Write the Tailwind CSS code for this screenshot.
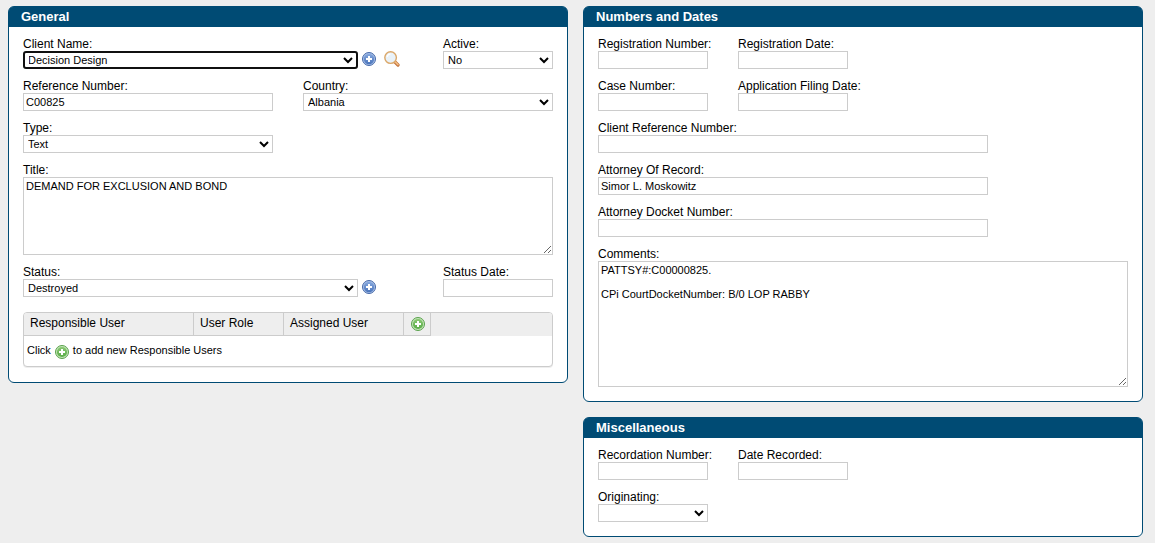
<!DOCTYPE html>
<html lang="en">
<head>
    <meta charset="UTF-8">
    <meta name="viewport" content="width=device-width, initial-scale=1.0">
    <title>Docket Record</title>
    <script src="https://cdn.jsdelivr.net/npm/@tailwindcss/browser@4"></script>
    <style>
        body {
            font-family: 'Liberation Sans', Arial, sans-serif;
        }
    </style>
</head>
<body class="h-[543px] overflow-hidden bg-[#eeeeee] text-[12px] leading-[14px] text-black">
    <!-- shared icons -->
    <svg class="absolute size-0">
        <defs>
            <linearGradient id="blue" x1="0" y1="0" x2="0" y2="1">
                <stop offset="0" stop-color="#86a8de"/>
                <stop offset="1" stop-color="#4a74bb"/>
            </linearGradient>
            <linearGradient id="green" x1="0" y1="0" x2="0" y2="1">
                <stop offset="0" stop-color="#8ac873"/>
                <stop offset="1" stop-color="#57ab46"/>
            </linearGradient>
            <symbol id="add-blue" viewBox="0 0 14 14">
                <circle cx="7" cy="7" r="6.5" fill="#a9c1e8" stroke="#4568a8"/>
                <circle cx="7" cy="7" r="5.2" fill="url(#blue)"/>
                <path d="M7 4v6M4 7h6" stroke="#fff" stroke-width="2"/>
            </symbol>
            <symbol id="add-green" viewBox="0 0 14 14">
                <circle cx="7" cy="7" r="6.5" fill="#c5e6b9" stroke="#58a04b"/>
                <circle cx="7" cy="7" r="5.1" fill="url(#green)"/>
                <path d="M7 4v6M4 7h6" stroke="#fff" stroke-width="2"/>
            </symbol>
            <symbol id="search" viewBox="0 0 16 16">
                <path d="M11 11l3 3" stroke="#c0713a" stroke-width="3.2" stroke-linecap="round"/>
                <path d="M11 10.6l3 3" stroke="#f2bd84" stroke-width="1.5" stroke-linecap="round"/>
                <circle cx="6.6" cy="6.6" r="5.8" fill="#e9f2f9" stroke="#dba768" stroke-width="1.4"/>
                <path d="M3.2 6a3.6 3.6 0 0 1 3.3-3" fill="none" stroke="#fff" stroke-width="1.2"/>
            </symbol>
        </defs>
    </svg>

    <div class="flex items-start gap-[15px] pt-[6px] pl-2">
        <!-- General -->
        <section class="h-[377px] w-[560px] rounded-[6px] border border-[#004b74] bg-white">
            <h2 class="h-5 rounded-t-[4px] bg-[#004b74] pl-3 text-[13px] leading-[19px] font-bold text-white">General</h2>
            <form class="flex flex-col gap-[10px] px-[14px] pt-[10px]">
                <div class="flex justify-between">
                    <div>
                        <label for="client" class="block">Client Name:</label>
                        <div class="flex h-[18px]">
                            <select id="client" class="h-[18px] w-[335px] rounded-[3px] border-2 border-[#101010] bg-white pr-0 text-[11px] -indent-px outline-none"><option>Decision Design</option></select>
                            <svg class="mt-px ml-1 size-[14px]"><use href="#add-blue"/></svg>
                            <svg class="ml-2 size-4"><use href="#search"/></svg>
                        </div>
                    </div>
                    <div>
                        <label for="active" class="block">Active:</label>
                        <select id="active" class="block h-[18px] w-[110px] border border-[#cccccc] bg-white text-[11px]"><option>No</option></select>
                    </div>
                </div>
                <div class="flex gap-[30px]">
                    <div>
                        <label for="reference" class="block">Reference Number:</label>
                        <input id="reference" type="text" value="C00825" class="block h-[18px] w-[250px] border border-[#cccccc] bg-white px-[2px] text-[11px]">
                    </div>
                    <div>
                        <label for="country" class="block">Country:</label>
                        <select id="country" class="block h-[18px] w-[250px] border border-[#cccccc] bg-white text-[11px]"><option>Albania</option></select>
                    </div>
                </div>
                <div>
                    <label for="type" class="block">Type:</label>
                    <select id="type" class="block h-[18px] w-[250px] border border-[#cccccc] bg-white text-[11px]"><option>Text</option></select>
                </div>
                <div>
                    <label for="title" class="block">Title:</label>
                    <textarea id="title" class="block h-[78px] w-[530px] border border-[#cccccc] bg-white px-[2px] py-[2px] text-[11px] leading-[12px]">DEMAND FOR EXCLUSION AND BOND</textarea>
                </div>
                <div class="flex justify-between">
                    <div>
                        <label for="status" class="block">Status:</label>
                        <div class="flex h-[18px]">
                            <select id="status" class="h-[18px] w-[335px] border border-[#cccccc] bg-white text-[11px]"><option>Destroyed</option></select>
                            <svg class="mt-px ml-1 size-[14px]"><use href="#add-blue"/></svg>
                        </div>
                    </div>
                    <div>
                        <label for="status-date" class="block">Status Date:</label>
                        <input id="status-date" type="text" class="block h-[18px] w-[110px] border border-[#cccccc] bg-white px-[2px] text-[11px]">
                    </div>
                </div>
                <div class="mt-[5px] h-[55px] w-[530px] overflow-hidden rounded-[4px] border border-[#cccccc] bg-white shadow-[0_1px_0_#eeeeee]">
                    <div class="flex h-[23px] bg-[#eeeeee] leading-[20px]">
                        <div class="w-[170px] border-r border-b border-[#cccccc] pl-[6px]">Responsible User</div>
                        <div class="w-[90px] border-r border-b border-[#cccccc] pl-[6px]">User Role</div>
                        <div class="w-[120px] border-r border-b border-[#cccccc] pl-[6px]">Assigned User</div>
                        <div class="w-[27px] border-r border-b border-[#cccccc] pt-1 pl-[7px]"><svg class="size-[14px]"><use href="#add-green"/></svg></div>
                    </div>
                    <div class="flex gap-1 pt-[7px] pl-[3px] text-[11px]">
                        <span>Click</span>
                        <svg class="mt-[2px] size-[14px]"><use href="#add-green"/></svg>
                        <span>to add new Responsible Users</span>
                    </div>
                </div>
            </form>
        </section>

        <div class="flex flex-col gap-[15px]">
            <!-- Numbers and Dates -->
            <section class="h-[396px] w-[560px] rounded-[6px] border border-[#004b74] bg-white">
                <h2 class="h-5 rounded-t-[4px] bg-[#004b74] pl-3 text-[13px] leading-[19px] font-bold text-white">Numbers and Dates</h2>
                <form class="flex flex-col gap-[10px] px-[14px] pt-[10px]">
                    <div class="flex">
                        <div class="w-[140px]">
                            <label for="reg-number" class="block">Registration Number:</label>
                            <input id="reg-number" type="text" class="block h-[18px] w-[110px] border border-[#cccccc] bg-white px-[2px] text-[11px]">
                        </div>
                        <div>
                            <label for="reg-date" class="block">Registration Date:</label>
                            <input id="reg-date" type="text" class="block h-[18px] w-[110px] border border-[#cccccc] bg-white px-[2px] text-[11px]">
                        </div>
                    </div>
                    <div class="flex">
                        <div class="w-[140px]">
                            <label for="case-number" class="block">Case Number:</label>
                            <input id="case-number" type="text" class="block h-[18px] w-[110px] border border-[#cccccc] bg-white px-[2px] text-[11px]">
                        </div>
                        <div>
                            <label for="filing-date" class="block">Application Filing Date:</label>
                            <input id="filing-date" type="text" class="block h-[18px] w-[110px] border border-[#cccccc] bg-white px-[2px] text-[11px]">
                        </div>
                    </div>
                    <div>
                        <label for="client-ref" class="block">Client Reference Number:</label>
                        <input id="client-ref" type="text" class="block h-[18px] w-[390px] border border-[#cccccc] bg-white px-[2px] text-[11px]">
                    </div>
                    <div>
                        <label for="attorney" class="block">Attorney Of Record:</label>
                        <input id="attorney" type="text" value="Simor L. Moskowitz" class="block h-[18px] w-[390px] border border-[#cccccc] bg-white px-[2px] text-[11px]">
                    </div>
                    <div>
                        <label for="docket" class="block">Attorney Docket Number:</label>
                        <input id="docket" type="text" class="block h-[18px] w-[390px] border border-[#cccccc] bg-white px-[2px] text-[11px]">
                    </div>
                    <div>
                        <label for="comments" class="block">Comments:</label>
                        <textarea id="comments" class="block h-[126px] w-[530px] border border-[#cccccc] bg-white px-[2px] py-[2px] text-[11px] leading-[12px]">PATTSY#:C00000825.

CPi CourtDocketNumber: B/0 LOP RABBY</textarea>
                    </div>
                </form>
            </section>

            <!-- Miscellaneous -->
            <section class="h-[120px] w-[560px] rounded-[6px] border border-[#004b74] bg-white">
                <h2 class="h-5 rounded-t-[4px] bg-[#004b74] pl-3 text-[13px] leading-[19px] font-bold text-white">Miscellaneous</h2>
                <form class="flex flex-col gap-[10px] px-[14px] pt-[10px]">
                    <div class="flex">
                        <div class="w-[140px]">
                            <label for="rec-number" class="block">Recordation Number:</label>
                            <input id="rec-number" type="text" class="block h-[18px] w-[110px] border border-[#cccccc] bg-white px-[2px] text-[11px]">
                        </div>
                        <div>
                            <label for="rec-date" class="block">Date Recorded:</label>
                            <input id="rec-date" type="text" class="block h-[18px] w-[110px] border border-[#cccccc] bg-white px-[2px] text-[11px]">
                        </div>
                    </div>
                    <div>
                        <label for="originating" class="block">Originating:</label>
                        <select id="originating" class="block h-[18px] w-[110px] border border-[#cccccc] bg-white text-[11px]"><option></option></select>
                    </div>
                </form>
            </section>
        </div>
    </div>
</body>
</html>
